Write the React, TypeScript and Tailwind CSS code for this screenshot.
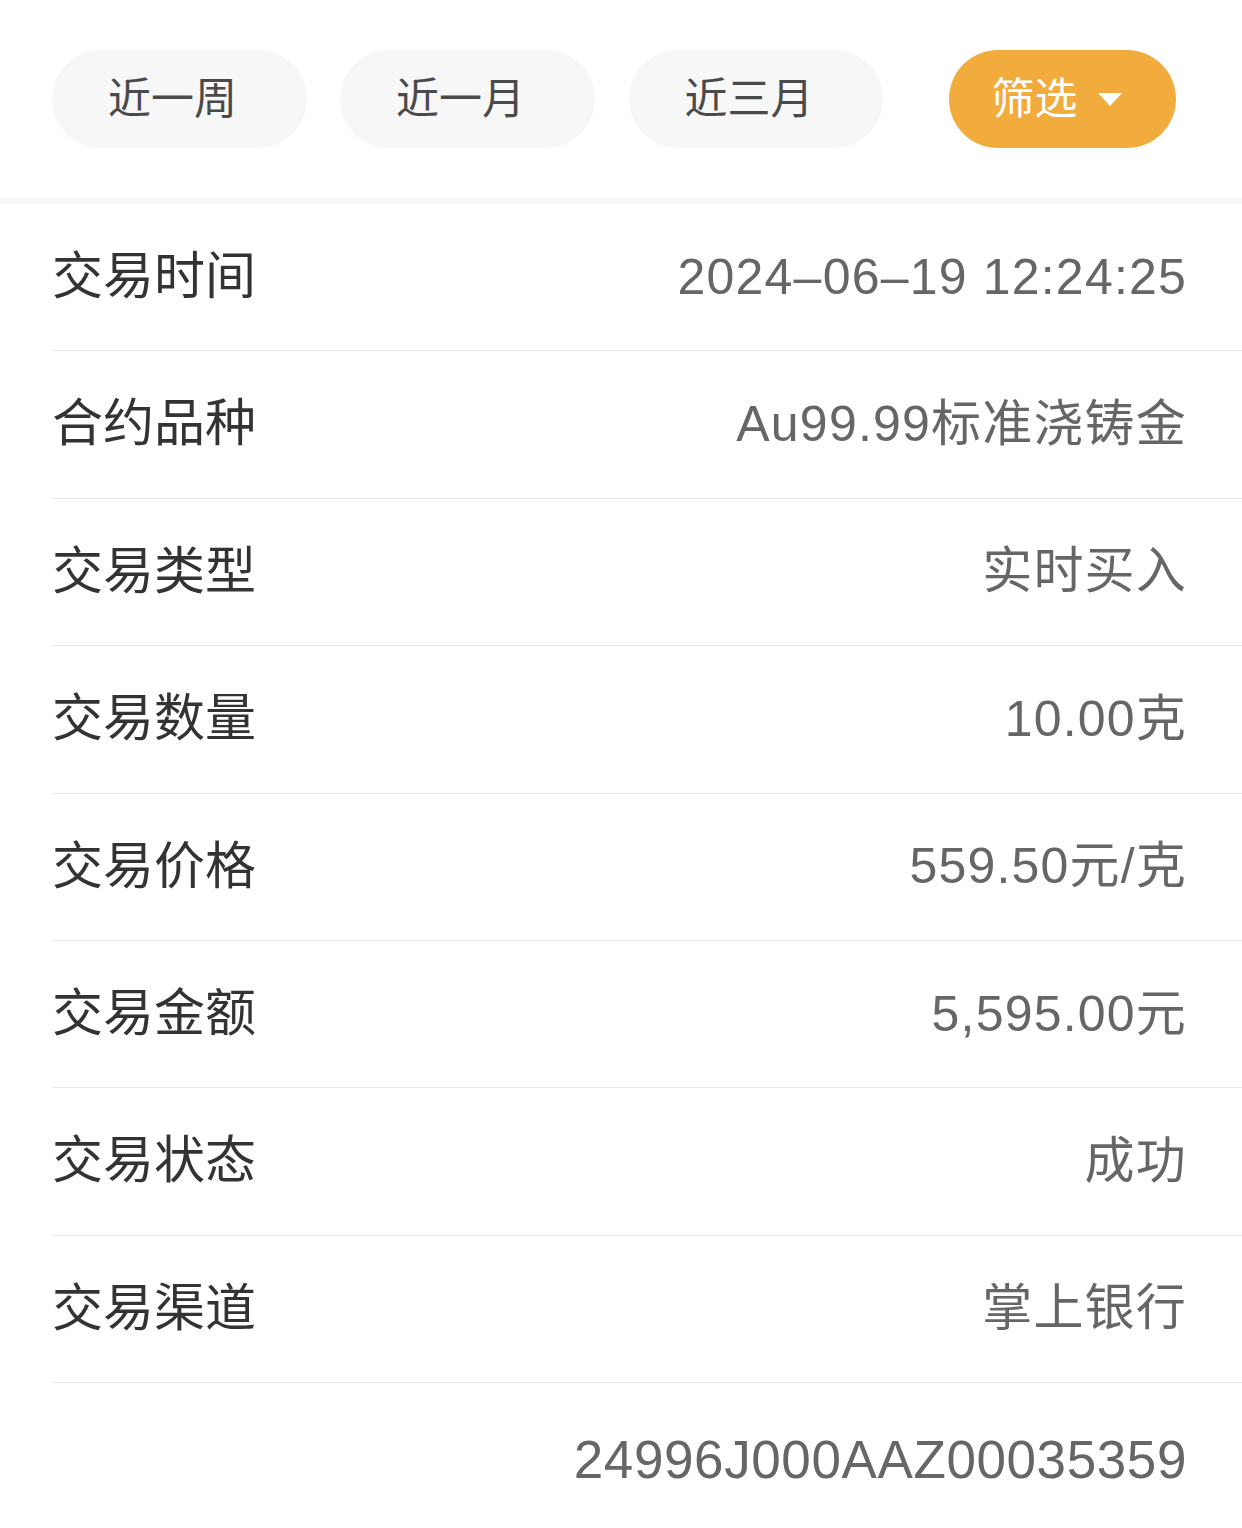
import React from 'react';

const rows: { label: string; value: string }[] = [
  { label: '交易时间', value: '2024–06–19 12:24:25' },
  { label: '合约品种', value: 'Au99.99标准浇铸金' },
  { label: '交易类型', value: '实时买入' },
  { label: '交易数量', value: '10.00克' },
  { label: '交易价格', value: '559.50元/克' },
  { label: '交易金额', value: '5,595.00元' },
  { label: '交易状态', value: '成功' },
  { label: '交易渠道', value: '掌上银行' },
];

const font = { fontFamily: '"Liberation Sans", "Noto Sans CJK SC", sans-serif' };

const App: React.FC = () => {
  return (
    <div className="w-[1242px] min-h-[1528px] bg-white overflow-hidden" style={font}>
      {/* Filter bar */}
      <div className="h-[198px] flex items-start pt-[50px] pl-[52px]">
        <button className="w-[255px] h-[98px] pr-[14px] rounded-full bg-[#f7f7f7] text-[#4a4a4a] text-[43px]">近一周</button>
        <button className="ml-[33px] w-[255px] h-[98px] pr-[14px] rounded-full bg-[#f7f7f7] text-[#4a4a4a] text-[43px]">近一月</button>
        <button className="ml-[34px] w-[254px] h-[98px] pr-[14px] rounded-full bg-[#f7f7f7] text-[#4a4a4a] text-[43px]">近三月</button>
        <button className="ml-[66px] w-[227px] h-[98px] pr-[12px] rounded-full bg-[#f2ac3e] text-white text-[43px] flex items-center justify-center gap-[20px]">
          <span>筛选</span>
          <svg width="24" height="13" viewBox="0 0 24 13">
            <path d="M0 0 H24 L12 13 Z" fill="#fff" />
          </svg>
        </button>
      </div>
      <div className="h-[6px] bg-[#f6f6f6]" />

      {/* Detail rows */}
      <div className="pl-[52px]">
        {rows.map((r) => (
          <div key={r.label} className="h-[147.4px] flex items-center justify-between pr-[55px] border-b border-[#e8e8e8]">
            <span className="text-[51px] text-[#333333]">{r.label}</span>
            <span className="text-[50px] text-[#666666] tracking-[1.2px]">{r.value}</span>
          </div>
        ))}
        <div className="h-[154px] flex items-center justify-end pr-[55px]">
          <span className="text-[53px] text-[#666666] tracking-[0.6px]">24996J000AAZ00035359</span>
        </div>
      </div>
    </div>
  );
};

export default App;
